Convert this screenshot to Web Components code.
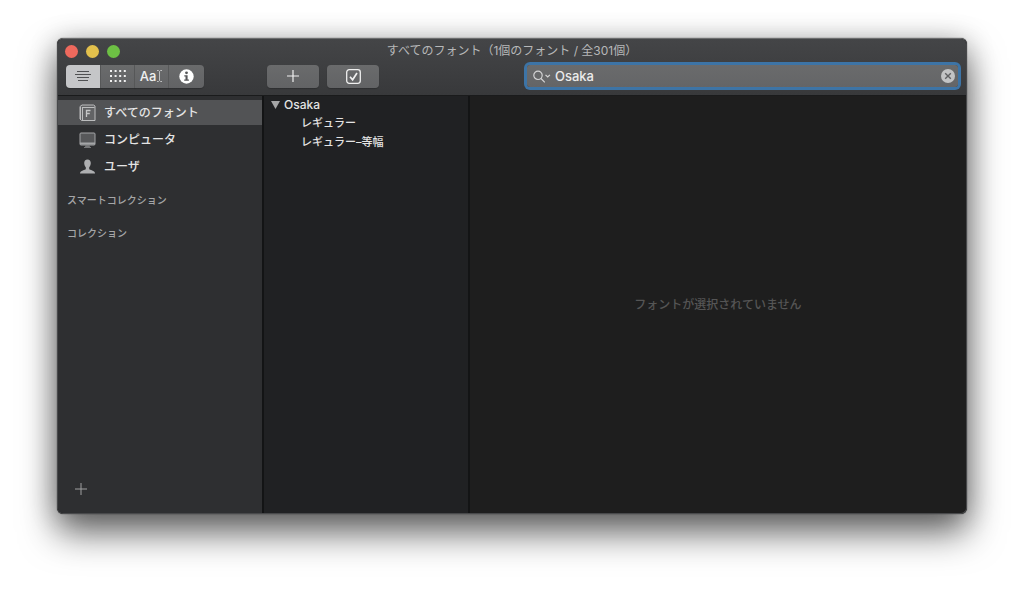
<!DOCTYPE html>
<html lang="ja">
<head>
<meta charset="utf-8">
<meta name="viewport" content="width=device-width, initial-scale=1">
<title>Font Book</title>
<style>
  * {
    box-sizing: border-box;
  }

  body {
    display: flex;
    min-height: 100vh;
    margin: 0;
    padding: 38px 57px 75px;
    background: #fff;
    color: #e4e4e4;
    font: 500 12px/18px Inter, "Noto Sans CJK JP", sans-serif;
  }
</style>
</head>
<body>
<font-window>
  <span slot="title">すべてのフォント（1個のフォント / 全301個）</span>
  <font-toolbar slot="toolbar"></font-toolbar>
  <font-sidebar slot="sidebar">
    <sidebar-item icon="book" selected>すべてのフォント</sidebar-item>
    <sidebar-item icon="display">コンピュータ</sidebar-item>
    <sidebar-item icon="user">ユーザ</sidebar-item>
    <sidebar-heading>スマートコレクション</sidebar-heading>
    <sidebar-heading>コレクション</sidebar-heading>
  </font-sidebar>
  <font-family slot="list">
    <span slot="name">Osaka</span>
    <font-style>レギュラー</font-style>
    <font-style>レギュラー–等幅</font-style>
  </font-family>
  <font-preview>フォントが選択されていません</font-preview>
</font-window>

<script>
function define(name, html, setup) {
  const template = document.createElement('template');
  template.innerHTML = `
    <style>
      * { box-sizing: border-box; }
      button { margin: 0; padding: 0; border: 0; background: none; color: inherit; font: inherit; }
      svg { display: block; }
    </style>
    ${html}
  `;

  customElements.define(name, class extends HTMLElement {
    constructor() {
      super();
      this.attachShadow({ mode: 'open' }).appendChild(template.content.cloneNode(true));
    }

    connectedCallback() {
      if (setup) setup(this, this.shadowRoot);
    }
  });
}

define('font-window', `
  <style>
    :host {
      display: flex;
      flex: 1;
      flex-direction: column;
      min-width: 0;
      overflow: hidden;
      border: 1px solid #48494b;
      border-top-color: #6c6d6e;
      border-radius: 6px;
      background: #1e1e1e;
      box-shadow: 0 0 1px #000, 0 19px 36px rgba(0, 0, 0, .58), 0 2px 28px rgba(0, 0, 0, .24);
    }
    header {
      padding-bottom: 6px;
      border-bottom: 1px solid #1a1b1c;
      background: linear-gradient(#444547, #38393b);
    }
    .titlebar {
      display: grid;
      grid-template-columns: 1fr auto 1fr;
      align-items: center;
      height: 24px;
      padding: 0 7px;
    }
    .lights {
      display: flex;
      gap: 8px;
    }
    .lights button {
      width: 13px;
      height: 13px;
      border-radius: 50%;
    }
    .close { background: #ee695d; }
    .minimize { background: #e2c04c; }
    .zoom { background: #6dc044; }
    h1 {
      margin: 0;
      color: #b7b8b9;
      font: inherit;
      font-weight: 400;
    }
    main {
      display: grid;
      flex: 1;
      grid-template-columns: 206px 206px 1fr;
    }
    nav, section {
      display: flex;
      min-width: 0;
    }
    nav { background: #2e2f31; }
    .list { background: #202123; }
    nav, .list { border-right: 2px solid #131415; }
  </style>
  <header>
    <div class="titlebar">
      <div class="lights">
        <button class="close" aria-label="閉じる"></button>
        <button class="minimize" aria-label="しまう"></button>
        <button class="zoom" aria-label="拡大"></button>
      </div>
      <h1><slot name="title"></slot></h1>
    </div>
    <slot name="toolbar"></slot>
  </header>
  <main>
    <nav><slot name="sidebar"></slot></nav>
    <section class="list"><slot name="list"></slot></section>
    <section><slot></slot></section>
  </main>
`);

define('font-toolbar', `
  <style>
    :host {
      display: flex;
      align-items: center;
      height: 26px;
      padding: 0 8px;
    }
    .views {
      display: flex;
      flex: none;
      width: 201px;
    }
    .views button {
      width: 34px;
      border-right: 1px solid #595a5b;
    }
    .views button:first-child {
      width: 35px;
      border-radius: 4px 0 0 4px;
      background: #c5c6c8;
      color: #505153;
    }
    .views button:last-child {
      width: 35px;
      border-right: 0;
      border-radius: 0 4px 4px 0;
    }
    .actions {
      display: flex;
      gap: 8px;
    }
    .actions button {
      width: 52px;
      border-radius: 4px;
    }
    button {
      display: flex;
      align-items: center;
      justify-content: center;
      height: 23px;
      background: linear-gradient(#6a6b6c, #626365);
      color: #f0f0f0;
      box-shadow: 0 1px 1px rgba(0, 0, 0, .2);
    }
    .preview { font-size: 13px; }
    search-field {
      flex: 0 1 431px;
      margin-left: auto;
    }
  </style>
  <div class="views">
    <button aria-label="サンプル" aria-pressed="true">
      <svg width="16" height="12" viewBox="0 0 16 12" stroke="currentColor" stroke-width="1.2">
        <path d="M2 1.500h12M0 4.500h16M2 7.500h12M3 10.500h10"/>
      </svg>
    </button>
    <button aria-label="レパートリー">
      <svg width="16" height="12" viewBox="0 0 16 12" stroke="currentColor" stroke-width="2" stroke-dasharray="2 2.6">
        <path d="M0 1h16M0 6h16M0 11h16"/>
      </svg>
    </button>
    <button class="preview" aria-label="カスタム">Aa<svg width="7" height="12" viewBox="0 0 7 12" fill="none" stroke="#bfc0c1">
        <path d="M1 .5h1.5l1 1 1-1H6M3.5 1.5v9M1 11.5h1.5l1-1 1 1H6"/>
      </svg></button>
    <button aria-label="情報">
      <svg width="15" height="15" viewBox="0 0 15 15">
        <circle cx="7.5" cy="7.5" r="7.2" fill="#fff"/>
        <circle cx="7.5" cy="3.8" r="1.4" fill="#555658"/>
        <path d="M5.3 6.2h3.3v4.3h1.3v1.3H5.2v-1.3h1.3v-3H5.3z" fill="#555658"/>
      </svg>
    </button>
  </div>
  <div class="actions">
    <button aria-label="フォントを追加">
      <svg width="12" height="12" viewBox="0 0 12 12" stroke="currentColor" stroke-width="1.2">
        <path d="M6 0v12M0 6h12"/>
      </svg>
    </button>
    <button aria-label="使用停止">
      <svg width="15" height="15" viewBox="0 0 15 15" fill="none" stroke="currentColor">
        <rect x=".7" y=".7" width="13.6" height="13.6" rx="2.5" stroke-width="1.3"/>
        <path d="M4 7.8l2.6 3L11 4" stroke-width="1.7"/>
      </svg>
    </button>
  </div>
  <search-field value="Osaka"></search-field>
`);

define('search-field', `
  <style>
    :host {
      display: flex;
      align-items: center;
      gap: 4px;
      height: 22px;
      padding: 0 3px 0 6px;
      border-radius: 3px;
      background: linear-gradient(#6a6b6c, #646567);
      box-shadow: 0 0 0 3px #3d74a6;
    }
    label, button { flex: none; }
    input {
      flex: 1;
      min-width: 0;
      padding: 0;
      border: 0;
      outline: 0;
      background: none;
      color: #ececec;
      font: inherit;
      font-size: 13px;
    }
  </style>
  <label for="query" aria-label="検索">
    <svg width="18" height="13" viewBox="0 0 18 13" fill="none" stroke="#d4d4d5" stroke-width="1.2">
      <circle cx="5" cy="5.3" r="4.2"/>
      <path d="M8 8.5l3.8 3.8M12.5 4.8l2.2 2.2 2.2-2.2"/>
    </svg>
  </label>
  <input id="query" type="text">
  <button aria-label="消去">
    <svg width="14" height="14" viewBox="0 0 14 14">
      <circle cx="7" cy="7" r="7" fill="#c3c4c5"/>
      <path d="M4.2 4.2l5.6 5.6M9.8 4.2L4.2 9.8" stroke="#606163" stroke-width="1.4"/>
    </svg>
  </button>
`, (host, root) => {
  const input = root.querySelector('input');
  input.value = host.getAttribute('value');
  root.querySelector('button').addEventListener('click', () => {
    input.value = '';
    input.focus();
  });
});

define('font-sidebar', `
  <style>
    :host {
      display: flex;
      flex: 1;
      flex-direction: column;
      padding: 3px 0 18px;
    }
    .add {
      margin: auto 0 0 17px;
      width: 12px;
      color: #a0a1a2;
    }
  </style>
  <slot></slot>
  <button class="add" aria-label="コレクションを追加">
    <svg width="12" height="12" viewBox="0 0 12 12" stroke="currentColor">
      <path d="M6 0v12M0 6h12"/>
    </svg>
  </button>
`);

const icons = {
  book: `
    <path d="M1 2.5L3 1h11.5l1.5 1v14.5H2.5L1 15z" fill="#626365" stroke="#bcbdbe"/>
    <path d="M1.5 3v12.5M3.5 3.5V16M3 3.5h12.5" stroke="#bcbdbe" fill="none"/>
    <path d="M7.5 13V6.5h4M7.5 9.5h3.3" stroke="#c6c7c8" stroke-width="1.3" fill="none"/>`,
  display: `
    <rect x="1" y="2" width="15" height="12" rx="1" fill="#57585a" stroke="#a4a5a7"/>
    <path d="M1 12.5h15" stroke="#a4a5a7" stroke-width="2"/>
    <path d="M6.5 14h4l.5 2h1v1H5v-1h1z" fill="#77787a"/>`,
  user: `
    <path d="M8.5 1.5c2.2 0 3.3 1.5 3.3 3.6 0 1.9-.8 3.3-1.6 4.2v1.8c.4 1.3 5.6 1.2 5.9 4.4H1c.3-3.2 5.4-3.1 5.8-4.4V9.3C6 8.4 5.2 7 5.2 5.1c0-2.1 1.1-3.6 3.3-3.6z" fill="#aeafb1"/>`
};

define('sidebar-item', `
  <style>
    :host {
      display: block;
      padding: 1px 0;
    }
    button {
      display: flex;
      align-items: center;
      gap: 8px;
      width: 100%;
      height: 25px;
      padding: 1px 0 0 21px;
      text-align: left;
    }
    :host([selected]) button { background: #525355; }
  </style>
  <button><svg width="17" height="18" viewBox="0 0 17 18"></svg><slot></slot></button>
`, (host, root) => {
  root.querySelector('svg').innerHTML = icons[host.getAttribute('icon')];
});

define('sidebar-heading', `
  <style>
    :host {
      display: block;
      padding: 11px 0 4px 9px;
    }
    h2 {
      margin: 0;
      color: #a5a6a7;
      font: inherit;
      font-size: 10px;
    }
  </style>
  <h2><slot></slot></h2>
`);

define('font-family', `
  <style>
    :host { padding-left: 7px; }
    button {
      display: flex;
      align-items: center;
      gap: 4px;
      height: 18px;
    }
  </style>
  <button aria-expanded="true">
    <svg width="9" height="8" viewBox="0 0 9 8"><path d="M0 0h9L4.5 8z" fill="#a5a6a7"/></svg>
    <slot name="name"></slot>
  </button>
  <div class="styles"><slot></slot></div>
`, (host, root) => {
  const button = root.querySelector('button');
  button.addEventListener('click', () => {
    const styles = root.querySelector('.styles');
    styles.hidden = !styles.hidden;
    button.setAttribute('aria-expanded', !styles.hidden);
  });
});

define('font-style', `
  <style>
    :host {
      display: block;
      padding-left: 30px;
      font-size: 11px;
      line-height: 19px;
    }
  </style>
  <slot></slot>
`);

define('font-preview', `
  <style>
    :host {
      display: flex;
      flex: 1;
      align-items: center;
      justify-content: center;
      color: #555;
    }
  </style>
  <slot></slot>
`);
</script>
</body>
</html>
